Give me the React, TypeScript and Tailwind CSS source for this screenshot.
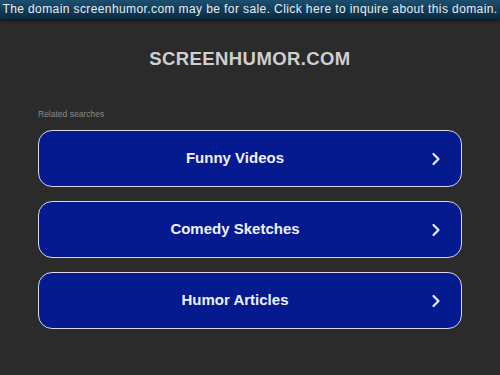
export default function App() {
  const items = ['Funny Videos', 'Comedy Sketches', 'Humor Articles']
  return (
    <div className="min-h-[375px] bg-[#2b2b2b]" style={{ fontFamily: '"Liberation Sans", Arial, sans-serif' }}>
      <div className="h-[19px] bg-gradient-to-b from-[#1d4f70] to-[#0a2a40] text-[12px] leading-[18px] text-[#e8eef2] tracking-[0.4px] text-center whitespace-nowrap overflow-hidden shadow-[0_2px_3px_rgba(0,0,0,0.5)]">
        The domain screenhumor.com may be for sale. Click here to inquire about this domain.
      </div>
      <div className="pt-[28px] text-center text-[18.5px] leading-[24px] font-bold tracking-[0.4px] text-[#cfcfcf]">
        SCREENHUMOR.COM
      </div>
      <div className="px-[38px] pt-[37px]">
        <div className="text-[8.5px] leading-[12px] text-[#8a8a8a] mb-[10px]">Related searches</div>
        <div className="flex flex-col gap-[14px]">
          {items.map((t) => (
            <div
              key={t}
              className="h-[57px] rounded-[14px] border border-[#d8d8e8] bg-[#041a8e] flex items-center pr-[20px]"
            >
              <span className="flex-1 text-center text-[15px] font-bold text-[#eef0ff]">{t}</span>
              <svg width="10" height="14" viewBox="0 0 10 14" fill="none">
                <path d="M2.5 2 L7.5 7 L2.5 12" stroke="#e8ecff" strokeWidth="2.2" strokeLinecap="round" strokeLinejoin="round" />
              </svg>
            </div>
          ))}
        </div>
      </div>
    </div>
  )
}
